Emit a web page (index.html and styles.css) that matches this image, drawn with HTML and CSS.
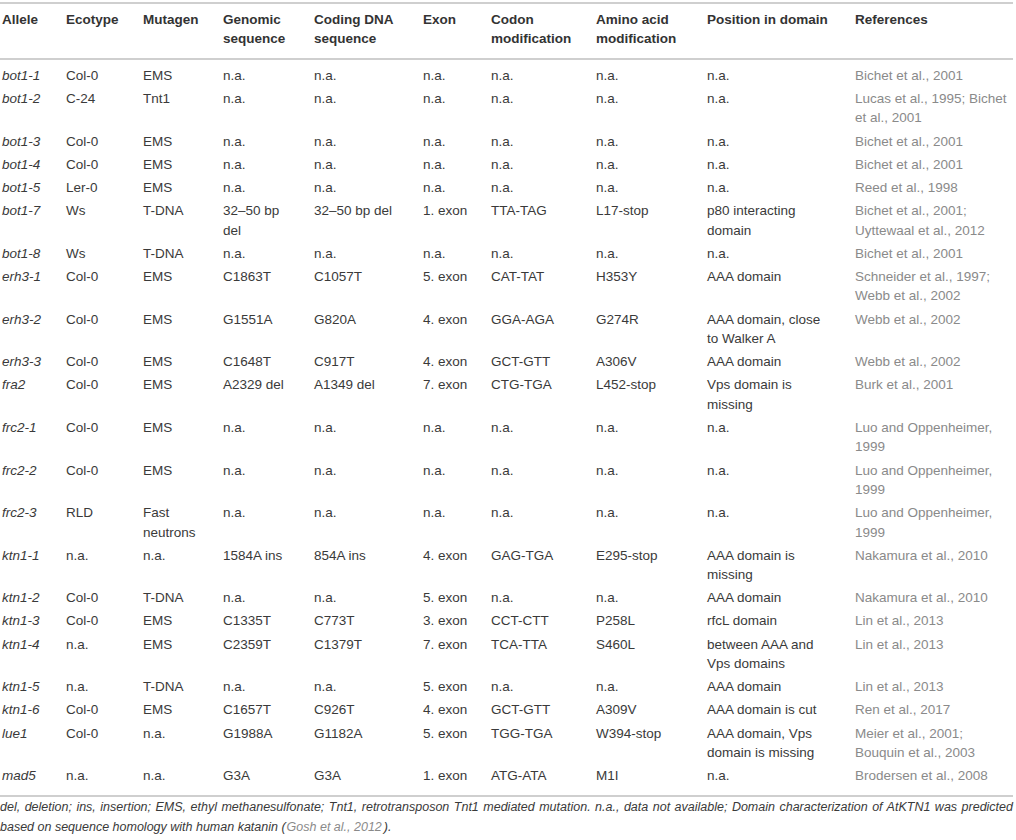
FILE: index.html
```html
<!DOCTYPE html>
<html>
<head>
<meta charset="utf-8">
<link rel="stylesheet" href="styles.css">
</head>
<body>
<div class="wrap">
<table class="tbl">
<colgroup>
<col class="c1"><col class="c2"><col class="c3"><col class="c4"><col class="c5"><col class="c6"><col class="c7"><col class="c8"><col class="c9"><col class="c10">
</colgroup>
<thead>
<tr>
<th>Allele</th><th>Ecotype</th><th>Mutagen</th><th>Genomic<br>sequence</th><th>Coding DNA<br>sequence</th><th>Exon</th><th>Codon<br>modification</th><th>Amino acid<br>modification</th><th>Position in domain</th><th>References</th>
</tr>
</thead>
<tbody>
<tr><td class="al">bot1-1</td><td>Col-0</td><td>EMS</td><td>n.a.</td><td>n.a.</td><td>n.a.</td><td>n.a.</td><td>n.a.</td><td>n.a.</td><td class="ref">Bichet et al., 2001</td></tr>
<tr><td class="al">bot1-2</td><td>C-24</td><td>Tnt1</td><td>n.a.</td><td>n.a.</td><td>n.a.</td><td>n.a.</td><td>n.a.</td><td>n.a.</td><td class="ref">Lucas et al., 1995; Bichet et al., 2001</td></tr>
<tr><td class="al">bot1-3</td><td>Col-0</td><td>EMS</td><td>n.a.</td><td>n.a.</td><td>n.a.</td><td>n.a.</td><td>n.a.</td><td>n.a.</td><td class="ref">Bichet et al., 2001</td></tr>
<tr><td class="al">bot1-4</td><td>Col-0</td><td>EMS</td><td>n.a.</td><td>n.a.</td><td>n.a.</td><td>n.a.</td><td>n.a.</td><td>n.a.</td><td class="ref">Bichet et al., 2001</td></tr>
<tr><td class="al">bot1-5</td><td>Ler-0</td><td>EMS</td><td>n.a.</td><td>n.a.</td><td>n.a.</td><td>n.a.</td><td>n.a.</td><td>n.a.</td><td class="ref">Reed et al., 1998</td></tr>
<tr><td class="al">bot1-7</td><td>Ws</td><td>T-DNA</td><td>32–50 bp del</td><td>32–50 bp del</td><td>1. exon</td><td>TTA-TAG</td><td>L17-stop</td><td>p80 interacting domain</td><td class="ref">Bichet et al., 2001; Uyttewaal et al., 2012</td></tr>
<tr><td class="al">bot1-8</td><td>Ws</td><td>T-DNA</td><td>n.a.</td><td>n.a.</td><td>n.a.</td><td>n.a.</td><td>n.a.</td><td>n.a.</td><td class="ref">Bichet et al., 2001</td></tr>
<tr><td class="al">erh3-1</td><td>Col-0</td><td>EMS</td><td>C1863T</td><td>C1057T</td><td>5. exon</td><td>CAT-TAT</td><td>H353Y</td><td>AAA domain</td><td class="ref">Schneider et al., 1997; Webb et al., 2002</td></tr>
<tr><td class="al">erh3-2</td><td>Col-0</td><td>EMS</td><td>G1551A</td><td>G820A</td><td>4. exon</td><td>GGA-AGA</td><td>G274R</td><td>AAA domain, close to Walker A</td><td class="ref">Webb et al., 2002</td></tr>
<tr><td class="al">erh3-3</td><td>Col-0</td><td>EMS</td><td>C1648T</td><td>C917T</td><td>4. exon</td><td>GCT-GTT</td><td>A306V</td><td>AAA domain</td><td class="ref">Webb et al., 2002</td></tr>
<tr><td class="al">fra2</td><td>Col-0</td><td>EMS</td><td>A2329 del</td><td>A1349 del</td><td>7. exon</td><td>CTG-TGA</td><td>L452-stop</td><td>Vps domain is missing</td><td class="ref">Burk et al., 2001</td></tr>
<tr><td class="al">frc2-1</td><td>Col-0</td><td>EMS</td><td>n.a.</td><td>n.a.</td><td>n.a.</td><td>n.a.</td><td>n.a.</td><td>n.a.</td><td class="ref">Luo and Oppenheimer, 1999</td></tr>
<tr><td class="al">frc2-2</td><td>Col-0</td><td>EMS</td><td>n.a.</td><td>n.a.</td><td>n.a.</td><td>n.a.</td><td>n.a.</td><td>n.a.</td><td class="ref">Luo and Oppenheimer, 1999</td></tr>
<tr><td class="al">frc2-3</td><td>RLD</td><td>Fast neutrons</td><td>n.a.</td><td>n.a.</td><td>n.a.</td><td>n.a.</td><td>n.a.</td><td>n.a.</td><td class="ref">Luo and Oppenheimer, 1999</td></tr>
<tr><td class="al">ktn1-1</td><td>n.a.</td><td>n.a.</td><td>1584A ins</td><td>854A ins</td><td>4. exon</td><td>GAG-TGA</td><td>E295-stop</td><td>AAA domain is missing</td><td class="ref">Nakamura et al., 2010</td></tr>
<tr><td class="al">ktn1-2</td><td>Col-0</td><td>T-DNA</td><td>n.a.</td><td>n.a.</td><td>5. exon</td><td>n.a.</td><td>n.a.</td><td>AAA domain</td><td class="ref">Nakamura et al., 2010</td></tr>
<tr><td class="al">ktn1-3</td><td>Col-0</td><td>EMS</td><td>C1335T</td><td>C773T</td><td>3. exon</td><td>CCT-CTT</td><td>P258L</td><td>rfcL domain</td><td class="ref">Lin et al., 2013</td></tr>
<tr><td class="al">ktn1-4</td><td>n.a.</td><td>EMS</td><td>C2359T</td><td>C1379T</td><td>7. exon</td><td>TCA-TTA</td><td>S460L</td><td>between AAA and Vps domains</td><td class="ref">Lin et al., 2013</td></tr>
<tr><td class="al">ktn1-5</td><td>n.a.</td><td>T-DNA</td><td>n.a.</td><td>n.a.</td><td>5. exon</td><td>n.a.</td><td>n.a.</td><td>AAA domain</td><td class="ref">Lin et al., 2013</td></tr>
<tr><td class="al">ktn1-6</td><td>Col-0</td><td>EMS</td><td>C1657T</td><td>C926T</td><td>4. exon</td><td>GCT-GTT</td><td>A309V</td><td>AAA domain is cut</td><td class="ref">Ren et al., 2017</td></tr>
<tr><td class="al">lue1</td><td>Col-0</td><td>n.a.</td><td>G1988A</td><td>G1182A</td><td>5. exon</td><td>TGG-TGA</td><td>W394-stop</td><td>AAA domain, Vps domain is missing</td><td class="ref">Meier et al., 2001; Bouquin et al., 2003</td></tr>
<tr><td class="al">mad5</td><td>n.a.</td><td>n.a.</td><td>G3A</td><td>G3A</td><td>1. exon</td><td>ATG-ATA</td><td>M1I</td><td>n.a.</td><td class="ref">Brodersen et al., 2008</td></tr>
</tbody>
</table>
<p class="note">del, deletion; ins, insertion; EMS, ethyl methanesulfonate; Tnt1, retrotransposon Tnt1 mediated mutation. n.a., data not available; Domain characterization of AtKTN1 was predicted based on sequence homology with human katanin (<span class="ref gosh">Gosh et al., 2012</span>).</p>
</div>
</body>
</html>
```

FILE: styles.css
```css
html, body {
  margin: 0;
  padding: 0;
  background: #fff;
}

body {
  font-family: "Liberation Sans", Arial, sans-serif;
  color: #3a3a3a;
}

.wrap {
  width: 1013px;
  padding-top: 2px;
}

.tbl {
  width: 1013px;
  border-collapse: collapse;
  table-layout: fixed;
  font-size: 13.5px;
  line-height: 19.4px;
}

.c1 { width: 64px; }
.c2 { width: 77px; }
.c3 { width: 80px; }
.c4 { width: 91px; }
.c5 { width: 109px; }
.c6 { width: 68px; }
.c7 { width: 105px; }
.c8 { width: 111px; }
.c9 { width: 148px; }
.c10 { width: 160px; }

.tbl thead tr {
  border-top: 2px solid #cfcfcf;
  border-bottom: 2px solid #cfcfcf;
}

.tbl th {
  text-align: left;
  vertical-align: top;
  font-weight: bold;
  color: #333;
  padding: 6px 20px 9px 2px;
}

.tbl td {
  text-align: left;
  vertical-align: top;
  padding: 1.9px 20px 1.9px 2px;
}

.tbl td.ref {
  padding-right: 4px;
}

.tbl tbody tr:first-child td {
  padding-top: 6px;
}

.tbl tbody tr:last-child {
  border-bottom: 2px solid #cfcfcf;
}

.tbl tbody tr:last-child td {
  padding-bottom: 9px;
}

.al {
  font-style: italic;
}

.ref {
  color: #8a8a8a;
}

.note {
  margin: 0;
  font-size: 12.5px;
  line-height: 20.5px;
  font-style: italic;
  text-align: justify;
  color: #3a3a3a;
}

.gosh {
  padding: 0 2px 0 1px;
}
```
